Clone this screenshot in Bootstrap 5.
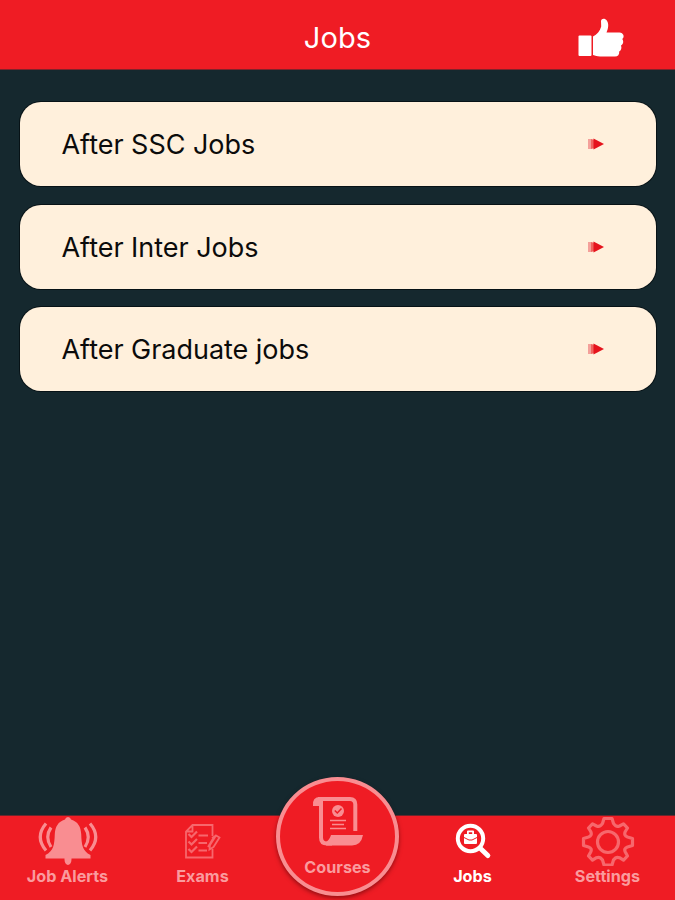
<!DOCTYPE html>
<html lang="en">
<head>
<meta charset="utf-8">
<meta name="viewport" content="width=device-width, initial-scale=1">
<title>Jobs</title>
<link href="https://cdn.jsdelivr.net/npm/bootstrap@5.3.0/dist/css/bootstrap.min.css" rel="stylesheet">
<style>
  :root { --red: #ef1c24; --soft: #f98d91; }
  body { background: #15282e; font-family: Inter, "Liberation Sans", sans-serif; }
  .topbar { height: 70px; background: var(--red); border-bottom: 1px solid #82222a; }
  .topbar h1 { font-size: 29px; line-height: 36px; font-weight: 400; margin-top: 7px; letter-spacing: .1px; }
  .like { right: 50px; top: 17px; }
  .job-list { padding: 32px 19px 0 20px; gap: 18.5px; }
  .job-item { height: 84px; border-radius: 21px; background: #fff0dc; color: #0b0b0b; font-size: 27px; padding: 0 52px 0 41.5px; box-shadow: 0 0 0 1px #071216; }
  .job-item:hover { color: #0b0b0b; }
  .job-item span { padding-top: 3px; letter-spacing: -.03px; }
  .tabbar { height: 84px; background: var(--red); box-shadow: 0 -1px 0 #6b252c; }
  .tab { color: var(--soft); font-size: 16.2px; line-height: 20px; font-weight: 700; }
  .tab.active { color: #fff; }
  .tab-label { white-space: nowrap; }
  .tab:not(.active) .tab-label { color: #fa9b9e; }
  .round-tab { width: 123px; height: 119px; margin-top: -39.5px; border-radius: 50%; border: 4px solid var(--soft); background: var(--red); padding-top: 14px; box-shadow: 0 2px 4px rgba(60,0,0,.5); }
  .round-tab .tab-label { margin-top: 10px; }
  .outline { color: #f7676c; }
  svg { display: block; flex: none; }
</style>
<script src="https://cdn.jsdelivr.net/npm/bootstrap@5.3.0/dist/js/bootstrap.bundle.min.js"></script>
</head>
<body class="vh-100 d-flex flex-column overflow-hidden">
  <header class="topbar position-relative d-flex align-items-center justify-content-center text-white flex-shrink-0">
    <h1 class="mb-0">Jobs</h1>
    <a href="#" class="like position-absolute text-white" aria-label="Like">
      <svg width="48" height="42" viewBox="0 0 48 42" fill="currentColor"><rect x="1.500" y="18.500" width="13" height="20.500" rx="1"/><path d="M16 19.500C20 17.500 23 14 24.200 9.500L24 4C24.500 1 28 .9 29.800 3.500C32 6.700 31.500 11 29.500 15.500H42.500C46.500 15.800 48 20 45.200 22C47 24 46.300 27.500 44 28.500C45 31 44.200 33.500 42.200 34.500C42.500 37.500 41 39.500 38 39.500H23C20 39.500 18.500 38.700 16 38Z"/></svg>
    </a>
  </header>

  <main class="job-list flex-grow-1 d-flex flex-column">
    <a href="#" class="job-item d-flex align-items-center justify-content-between text-decoration-none"><span>After SSC Jobs</span>
      <svg width="17" height="12" viewBox="0 0 17 12"><path fill="#f4a09a" d="M1 1H4V11H1Z"/><path fill="#f0645f" d="M4 1L8 2V10L4 11Z"/><path fill="#e5131c" d="M6.500 .5L17 6L6.500 11.500Z"/></svg></a>
    <a href="#" class="job-item d-flex align-items-center justify-content-between text-decoration-none"><span>After Inter Jobs</span>
      <svg width="17" height="12" viewBox="0 0 17 12"><path fill="#f4a09a" d="M1 1H4V11H1Z"/><path fill="#f0645f" d="M4 1L8 2V10L4 11Z"/><path fill="#e5131c" d="M6.500 .5L17 6L6.500 11.500Z"/></svg></a>
    <a href="#" class="job-item d-flex align-items-center justify-content-between text-decoration-none"><span>After Graduate jobs</span>
      <svg width="17" height="12" viewBox="0 0 17 12"><path fill="#f4a09a" d="M1 1H4V11H1Z"/><path fill="#f0645f" d="M4 1L8 2V10L4 11Z"/><path fill="#e5131c" d="M6.500 .5L17 6L6.500 11.500Z"/></svg></a>
  </main>

  <nav class="tabbar row g-0 flex-shrink-0">
    <a href="#" class="tab col d-flex flex-column align-items-center text-decoration-none">
      <svg width="64" height="50" viewBox="36 816 64 50"><path fill="currentColor" d="M68 817Q70.500 817 71 819.500C78 821.500 80.800 827 81.200 834C81.600 845 82.500 851 90.500 855V858.500H71.500C72 867 64 867 64.500 858.500H45.500V855C53.500 851 54.400 845 54.800 834C55.200 827 58 821.500 65 819.500Q65.500 817 68 817Z"/><g fill="none" stroke="currentColor" stroke-width="3.200"><path d="M46 823.500Q34.500 837 46 850.500M51 827.500Q44.500 837 51 847M90 823.500Q101.500 837 90 850.500M85 827.500Q91.500 837 85 847"/></g></svg>
      <span class="tab-label">Job Alerts</span>
    </a>
    <a href="#" class="tab col d-flex flex-column align-items-center text-decoration-none">
      <svg class="outline" width="64" height="50" viewBox="171 816 64 50" fill="none" stroke="currentColor" stroke-width="1.800"><path d="M212.500 836V825H192.500L186 831.500V857.500H212.500V849M192.500 825V831.500H186M198.500 835.500H208M198.500 843H207M198.500 850.500H207"/><path stroke-width="2.200" d="M188.500 834L191.500 837L197 831.500M188.500 841.500L191.500 844.500L197 839M188.500 849L191.500 852L197 846.500"/><path d="M210 845L216 835.500L219.500 837.500L213.500 847L209.500 849.500ZM212 838L216 835.500M208 847L214 837"/></svg>
      <span class="tab-label">Exams</span>
    </a>
    <div class="col d-flex justify-content-center">
      <a href="#" class="tab round-tab d-flex flex-column align-items-center text-decoration-none">
        <svg width="54" height="52" viewBox="311 795 54 52"><path fill="none" stroke="currentColor" stroke-width="4" d="M318 799H350Q355.300 799 355.300 804.500V831M321 799V837.500Q321 843.500 327 843.500H332"/><path fill="currentColor" d="M313 806Q312 797 320 797L321 806Z"/><path fill="currentColor" d="M326 845.500V842Q329.500 840 331 835H363Q361 845.500 352 845.500Z"/><circle cx="338" cy="811" r="6" fill="currentColor"/><path fill="none" stroke="#ef1c24" stroke-width="1.500" d="M334.800 810.500L337.300 813L341.500 808.500"/><path stroke="currentColor" stroke-width="1.700" d="M330 820.500H346M332 824.500H344M330 828.500H346"/></svg>
        <span class="tab-label">Courses</span>
      </a>
    </div>
    <a href="#" class="tab active col d-flex flex-column align-items-center text-decoration-none" aria-current="page">
      <svg width="64" height="50" viewBox="438.500 816 64 50"><circle cx="468" cy="838.500" r="12.700" fill="none" stroke="currentColor" stroke-width="4"/><path stroke="currentColor" stroke-width="5" stroke-linecap="round" d="M478.500 849L485.300 855.500"/><path fill="currentColor" d="M464.500 834V831.500Q464.500 830.500 465.500 830.500H470.500Q471.500 830.500 471.500 831.500V834H473.500Q474.500 834 474.500 835V843Q474.500 844 473.500 844H462.500Q461.500 844 461.500 843V835Q461.500 834 462.500 834ZM466.300 834H469.700V832.300H466.300Z"/><path fill="none" stroke="#ef1c24" stroke-width="1" d="M461.500 837.500L466.500 840H469.500L474.500 837.500"/></svg>
      <span class="tab-label">Jobs</span>
    </a>
    <a href="#" class="tab col d-flex flex-column align-items-center text-decoration-none">
      <svg class="outline" width="64" height="50" viewBox="576 816 64 50" fill="none" stroke="currentColor" stroke-width="3.200" stroke-linejoin="round"><circle cx="608" cy="842" r="10.500"/><path d="M604 818.500H612L613.500 823.500Q616 827.500 619.500 826L623.500 823.800L627.500 828L625.300 831.500Q623.500 835.500 627.500 837L632.500 838.500V845.500L627.500 847Q623.500 848.500 625.300 852L627.500 856L623.500 860.200L619.500 857.700Q616 856.200 613.500 860L612 865H604L602.500 860Q600 856.200 596.500 857.700L592.500 860.200L588.500 856L590.700 852Q592.500 848.500 588.500 847L583.500 845.500V838.500L588.500 837Q592.500 835.500 590.700 831.500L588.500 828L592.500 823.800L596.500 826Q600 827.500 602.500 823.500Z"/></svg>
      <span class="tab-label">Settings</span>
    </a>
  </nav>
</body>
</html>
